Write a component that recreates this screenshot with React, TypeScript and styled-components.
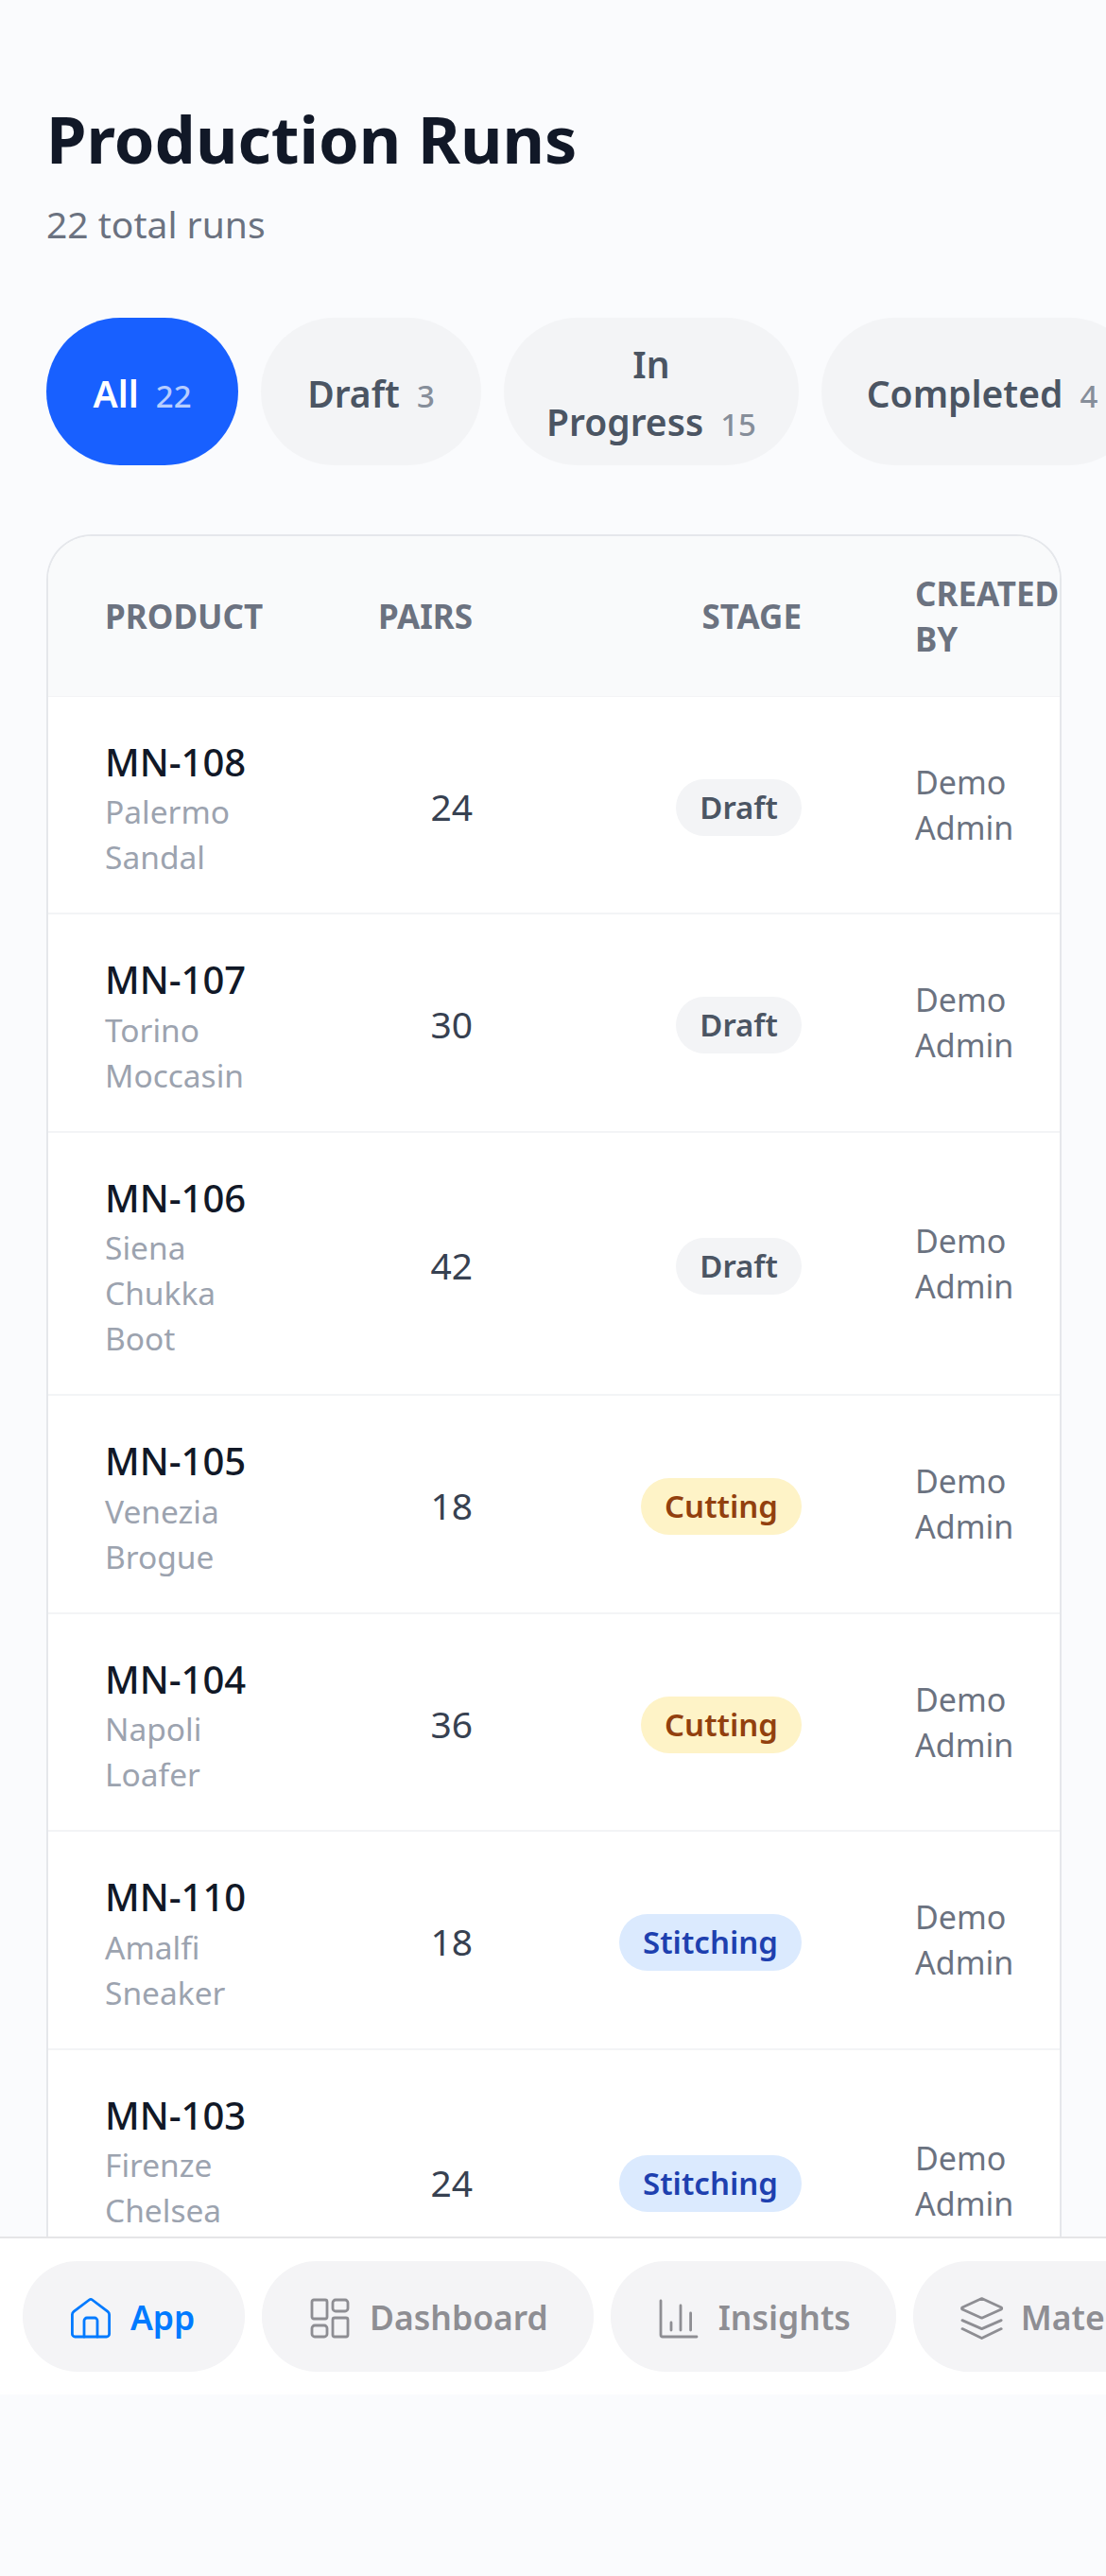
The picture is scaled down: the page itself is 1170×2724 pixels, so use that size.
import React from "react";
import styled, { createGlobalStyle } from "styled-components";

const Global = createGlobalStyle`
  html, body { margin: 0; padding: 0; background: #fafbfd; }
  body { font-family: "Noto Sans", "Open Sans", sans-serif; }
  * { box-sizing: border-box; }
`;

const Page = styled.div`
  width: 1170px;
  height: 2724px;
  overflow: hidden;
  background: #fafbfd;
`;
const Screen = styled.div`
  height: 2532px;
  display: flex;
  flex-direction: column;
`;
const Content = styled.main`
  flex: 1;
  min-height: 0;
  overflow: hidden;
  padding: 93px 0 0 49px;
`;
const Title = styled.h1`
  margin: 0;
  font-size: 68.5px;
  line-height: 108px;
  font-weight: 700;
  color: #111827;
`;
const Subtitle = styled.p`
  margin: 6px 0 0;
  font-size: 39px;
  line-height: 60px;
  color: #6b7280;
`;
const Filters = styled.div`
  display: flex;
  gap: 24px;
  margin-top: 69px;
  width: 1121px;
  overflow: hidden;
`;
const Filter = styled.button<{ $active?: boolean; $w: number }>`
  flex: 0 0 ${(p) => p.$w}px;
  height: 156px;
  padding: 5px 40px 0;
  border: 0;
  border-radius: 78px;
  font-family: inherit;
  font-size: 39px;
  line-height: 61px;
  font-weight: 600;
  text-align: center;
  background: ${(p) => (p.$active ? "#1860ff" : "#f3f4f6")};
  color: ${(p) => (p.$active ? "#ffffff" : "#4b5563")};
`;
const Count = styled.span<{ $active?: boolean }>`
  margin-left: 18px;
  font-size: 33px;
  font-weight: 500;
  color: ${(p) => (p.$active ? "rgba(255,255,255,.7)" : "#868e9a")};
`;
const Card = styled.section`
  margin-top: 73px;
  width: 1074px;
  border: 2px solid #e5e7eb;
  border-bottom: 0;
  border-radius: 48px 48px 0 0;
  background: #fff;
  overflow: hidden;
`;
const Table = styled.table`
  width: 1138px;
  table-layout: fixed;
  border-collapse: collapse;
`;
const Th = styled.th<{ $align?: string; $w: number }>`
  width: ${(p) => p.$w}px;
  height: 169px;
  padding: 2px 60px 0;
  text-align: ${(p) => p.$align || "left"};
  background: #f9fafb;
  border-bottom: 1px solid #f3f4f6;
  font-size: 35px;
  line-height: 48px;
  font-weight: 700;
  color: #6b7280;
  text-transform: uppercase;
`;
const Row = styled.tr`
  border-bottom: 2px solid #f3f4f6;
`;
const Td = styled.td<{ $align?: string }>`
  padding: 35px 60px;
  text-align: ${(p) => p.$align || "left"};
  vertical-align: middle;
`;
const Code = styled.div`
  padding-top: 6px;
  font-size: 40px;
  line-height: 56.5px;
  font-weight: 500;
  white-space: nowrap;
  color: #111827;
`;
const Name = styled.div`
  font-size: 33.5px;
  line-height: 48px;
  color: #9ca3af;
`;
const Pairs = styled.span`
  display: inline-block;
  padding-top: 3px;
  font-size: 39px;
  color: #374151;
`;
const Badge = styled.span<{ $bg: string; $fg: string }>`
  display: inline-block;
  margin-top: 6px;
  padding: 0 25px;
  border-radius: 30px;
  font-size: 33px;
  line-height: 60px;
  font-weight: 600;
  background: ${(p) => p.$bg};
  color: ${(p) => p.$fg};
`;
const Creator = styled.div`
  font-size: 34px;
  line-height: 48px;
  color: #6b7280;
`;
const Nav = styled.nav`
  flex: 0 0 167px;
  display: flex;
  gap: 18px;
  padding: 24px 0 0 24px;
  background: #fff;
  border-top: 2px solid #e5e5e7;
  overflow: hidden;
`;
const NavItem = styled.div<{ $active?: boolean }>`
  flex: none;
  min-width: ${(p) => (p.$active ? "235px" : "0")};
  height: 117px;
  display: flex;
  align-items: center;
  gap: 18px;
  padding: 0 48px;
  border-radius: 58px;
  background: #f4f4f6;
  font-size: 35.5px;
  font-weight: 600;
  color: ${(p) => (p.$active ? "#007aff" : "#8e8e93")};
`;
const Icon = styled.svg`
  width: 48px;
  height: 48px;
  flex: none;
  fill: none;
  stroke: currentColor;
  stroke-width: 1.4;
  stroke-linecap: round;
  stroke-linejoin: round;
`;

const runs = [
  ["MN-108", "Palermo Sandal", "24", "d"],
  ["MN-107", "Torino Moccasin", "30", "d"],
  ["MN-106", "Siena Chukka Boot", "42", "d"],
  ["MN-105", "Venezia Brogue", "18", "c"],
  ["MN-104", "Napoli Loafer", "36", "c"],
  ["MN-110", "Amalfi Sneaker", "18", "s"],
  ["MN-103", "Firenze Chelsea Boot", "24", "s"],
];
const stages: Record<string, { t: string; bg: string; fg: string }> = {
  d: { t: "Draft", bg: "#f3f4f6", fg: "#4b5563" },
  c: { t: "Cutting", bg: "#fef3c7", fg: "#92400e" },
  s: { t: "Stitching", bg: "#dbeafe", fg: "#1e40af" },
};

export default function App() {
  return (
    <Page>
      <Global />
      <Screen>
        <Content>
          <Title>Production Runs</Title>
          <Subtitle>22 total runs</Subtitle>
          <Filters>
            <Filter $active $w={203}>All<Count $active>22</Count></Filter>
            <Filter $w={233}>Draft<Count>3</Count></Filter>
            <Filter $w={312}>In Progress<Count>15</Count></Filter>
            <Filter $w={340}>Completed<Count>4</Count></Filter>
          </Filters>
          <Card>
            <Table>
              <thead>
                <tr>
                  <Th $w={272}>Product</Th>
                  <Th $w={237} $align="right">Pairs</Th>
                  <Th $w={348} $align="right">Stage</Th>
                  <Th $w={281}>Created By</Th>
                </tr>
              </thead>
              <tbody>
                {runs.map((r) => (
                  <Row key={r[0]}>
                    <Td>
                      <Code>{r[0]}</Code>
                      <Name>{r[1]}</Name>
                    </Td>
                    <Td $align="right"><Pairs>{r[2]}</Pairs></Td>
                    <Td $align="right">
                      <Badge $bg={stages[r[3]].bg} $fg={stages[r[3]].fg}>{stages[r[3]].t}</Badge>
                    </Td>
                    <Td><Creator>Demo Admin</Creator></Td>
                  </Row>
                ))}
              </tbody>
            </Table>
          </Card>
        </Content>
        <Nav>
          <NavItem $active>
            <Icon viewBox="0 0 24 24">
              <path d="M11.200 3 3 9.200a2 2 0 0 0-.8 1.600V21a1.500 1.500 0 0 0 1.500 1.500h16.600a1.500 1.500 0 0 0 1.500-1.500V10.800a2 2 0 0 0-.8-1.600L12.800 3a1.300 1.300 0 0 0-1.600 0z" />
              <path d="M8.500 22.500V14a1.500 1.500 0 0 1 1.500-1.500h4a1.500 1.500 0 0 1 1.500 1.500v8.500" />
            </Icon>
            App
          </NavItem>
          <NavItem>
            <Icon viewBox="0 0 24 24">
              <rect x="2.500" y="3" width="8" height="10" rx="1" />
              <rect x="13.500" y="3" width="8" height="6" rx="1.500" />
              <rect x="13.500" y="12.500" width="8" height="10" rx="1" />
              <rect x="2.500" y="16.500" width="8" height="6" rx="1.500" />
            </Icon>
            Dashboard
          </NavItem>
          <NavItem>
            <Icon viewBox="0 0 24 24">
              <path d="M2.500 3.500V21.500a1 1 0 0 0 1 1h18" />
              <path d="M8 15v4M13 6v13M18.300 10v9" />
            </Icon>
            Insights
          </NavItem>
          <NavItem>
            <Icon viewBox="0 0 24 24">
              <path d="M12.300 2.300 22.600 7a.6.6 0 0 1 0 1L12.300 12.600 2 8a.6.6 0 0 1 0-1z" />
              <path d="M2 13.800l10.300 4.500 10.300-4.500" />
              <path d="M2 18.300l10.300 5 10.300-5" />
            </Icon>
            Materials
          </NavItem>
        </Nav>
      </Screen>
    </Page>
  );
}
